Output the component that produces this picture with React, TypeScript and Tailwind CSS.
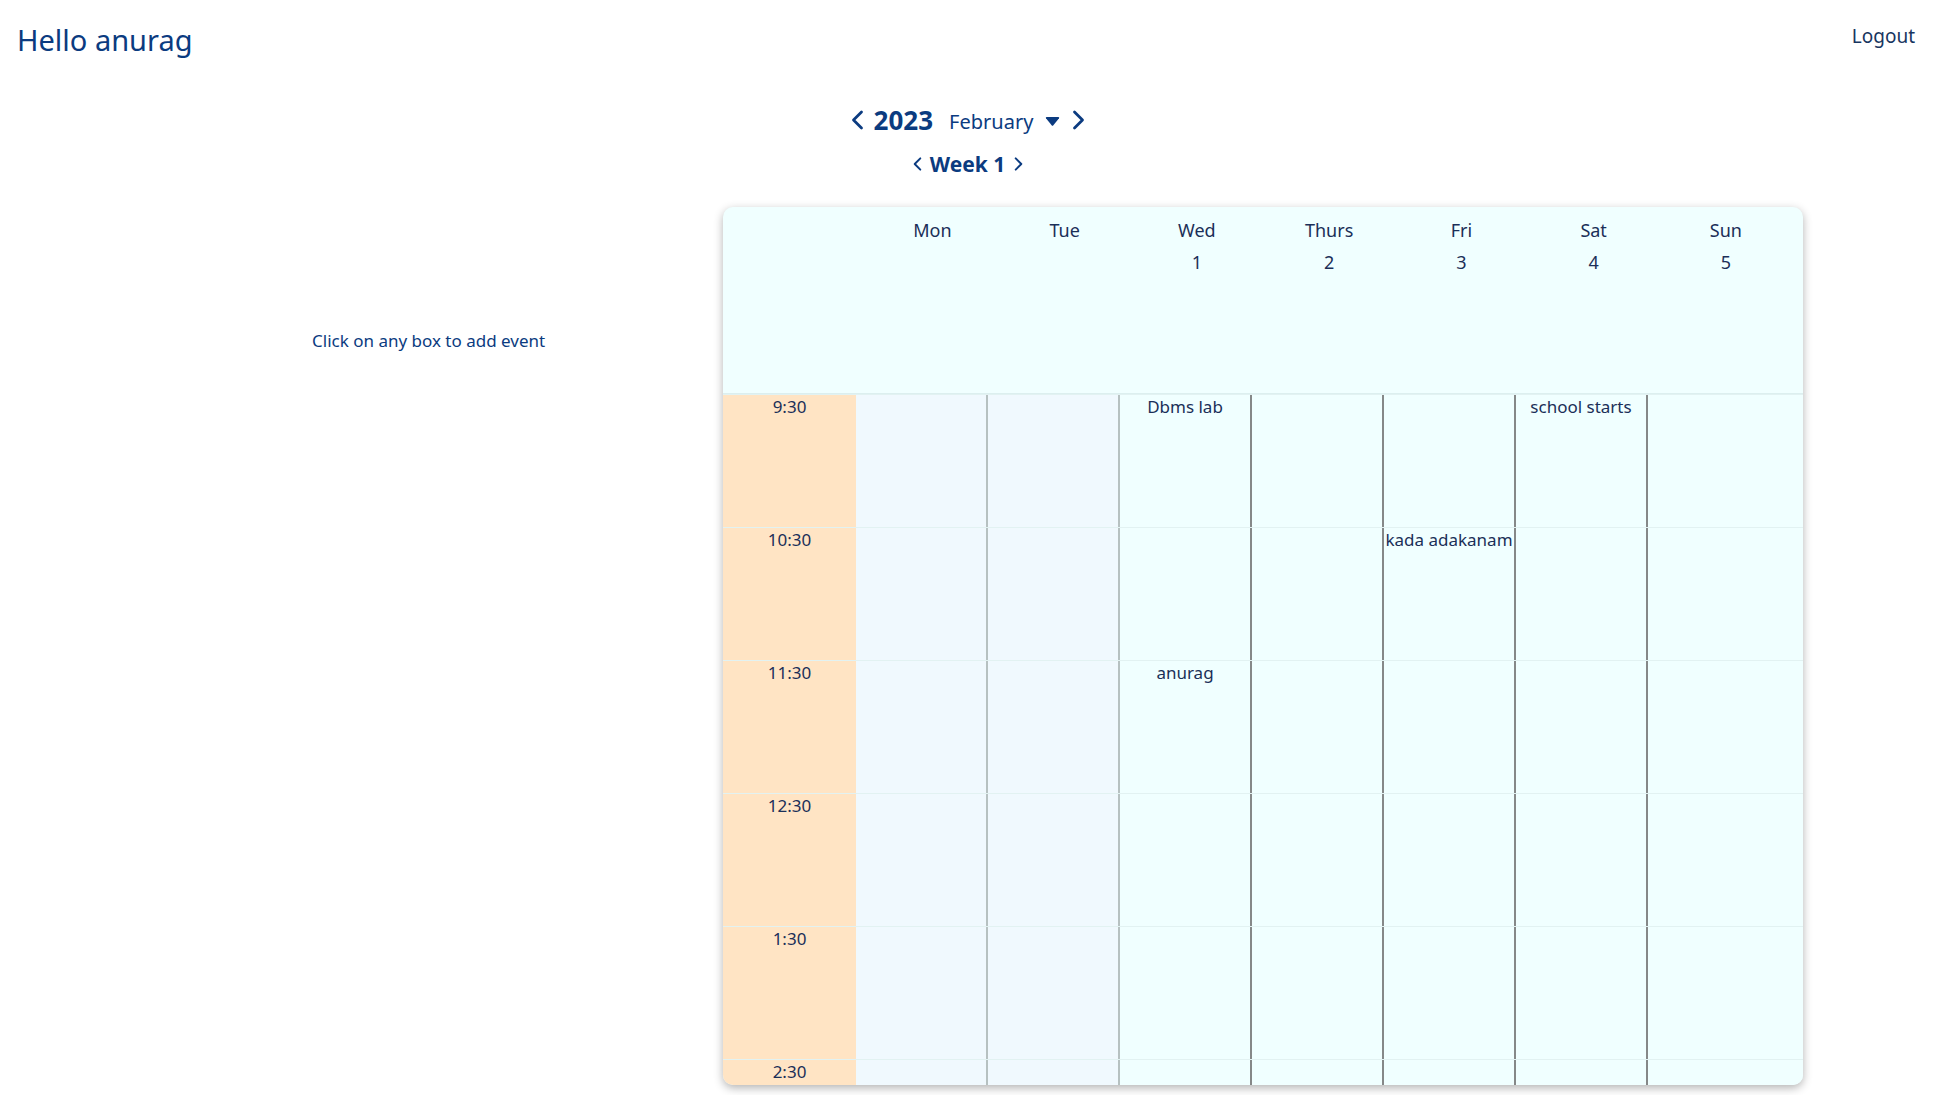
import React from 'react';

const days = [
  { name: 'Mon', date: '' },
  { name: 'Tue', date: '' },
  { name: 'Wed', date: '1' },
  { name: 'Thurs', date: '2' },
  { name: 'Fri', date: '3' },
  { name: 'Sat', date: '4' },
  { name: 'Sun', date: '5' },
];

const times = ['9:30', '10:30', '11:30', '12:30', '1:30', '2:30'];

// events keyed by "row-col"
const events: Record<string, string> = {
  '0-2': 'Dbms lab',
  '0-5': 'school starts',
  '1-4': 'kada adakanam',
  '2-2': 'anurag',
};

const Chevron = ({ dir, w, h }: { dir: 'left' | 'right'; w: number; h: number }) => (
  <svg width={w} height={h} viewBox="0 0 12 20" fill="none" stroke="#0b3b80" strokeWidth="2.8" strokeLinecap="round" strokeLinejoin="round">
    {dir === 'left' ? <polyline points="10,2 2,10 10,18" /> : <polyline points="2,2 10,10 2,18" />}
  </svg>
);

const Caret = () => (
  <svg width="15" height="9" viewBox="0 0 15 9" fill="#0b3b80">
    <path d="M1 1.2 Q0.4 0 1.8 0 H13.2 Q14.6 0 14 1.2 L8.4 8.2 Q7.5 9.2 6.6 8.2 Z" />
  </svg>
);

const CalendarCard = () => (
  <div className="w-[1080px] h-[878px] rounded-[10px] overflow-hidden shadow-[0_3px_10px_rgba(0,0,0,0.3)] bg-[#f0ffff] text-[#1b2f58]">
    <div className="h-[187px] px-[11px] grid grid-cols-8 border-b border-[#dcefef]">
      <div />
      {days.map((d) => (
        <div key={d.name} className="flex flex-col items-center pt-[11px]">
          <span className="text-[18px] leading-[24px]">{d.name}</span>
          <span className="text-[18px] leading-[24px] mt-[8px]">{d.date}</span>
        </div>
      ))}
    </div>
    {times.map((t, r) => (
      <div key={t} className="flex h-[133px] border-t border-[#e2f2f2] first:border-t-0">
        <div className="w-[133px] shrink-0 bg-[#ffe4c4] text-center text-[17px] leading-[24px]">{t}</div>
        {days.map((d, c) => {
          const light = c < 2;
          const last = c === days.length - 1;
          return (
            <div
              key={d.name}
              className={
                (last ? 'flex-1 ' : 'w-[132px] shrink-0 ') +
                (light ? 'bg-[#f0f9fe] ' : 'bg-[#f0ffff] ') +
                (last ? '' : light ? 'border-r-2 border-[#b6c1c1] ' : 'border-r-2 border-[#858888] ') +
                'text-center text-[17px] leading-[24px] whitespace-nowrap'
              }
            >
              {events[`${r}-${c}`] ?? ''}
            </div>
          );
        })}
      </div>
    ))}
  </div>
);

export default function App() {
  return (
    <div className="min-h-screen bg-white font-['Noto_Sans',sans-serif] text-[#0b3b80]">
      <div className="h-[80px] flex items-start justify-between px-[17px]">
        <h1 className="text-[29px] leading-[36px] pt-[22px]">Hello anurag</h1>
        <span className="text-[19px] leading-[24px] mt-[24px] pr-[4px] text-[#173560] cursor-pointer">Logout</span>
      </div>

      <div className="mt-[20px] h-[40px] flex items-center justify-center">
        <button className="mr-[10px]"><Chevron dir="left" w={13} h={20} /></button>
        <span className="text-[26px] font-bold leading-[32px]">2023</span>
        <span className="ml-[16px] text-[20px] leading-[26px] mt-[3px]">February</span>
        <span className="ml-[12px] mt-[2px]"><Caret /></span>
        <button className="ml-[12px]"><Chevron dir="right" w={13} h={20} /></button>
      </div>

      <div className="mt-[8px] h-[32px] flex items-center justify-center">
        <button className="mr-[8px]"><Chevron dir="left" w={9} h={14} /></button>
        <span className="text-[21px] font-bold leading-[28px]">Week 1</span>
        <button className="ml-[9px]"><Chevron dir="right" w={9} h={14} /></button>
      </div>

      <div className="mt-[27px] flex">
        <div className="w-[723px] shrink-0 pt-[122px] pl-[312px]">
          <p className="text-[17px] leading-[24px] whitespace-nowrap">Click on any box to add event</p>
        </div>
        <CalendarCard />
      </div>
    </div>
  );
}
